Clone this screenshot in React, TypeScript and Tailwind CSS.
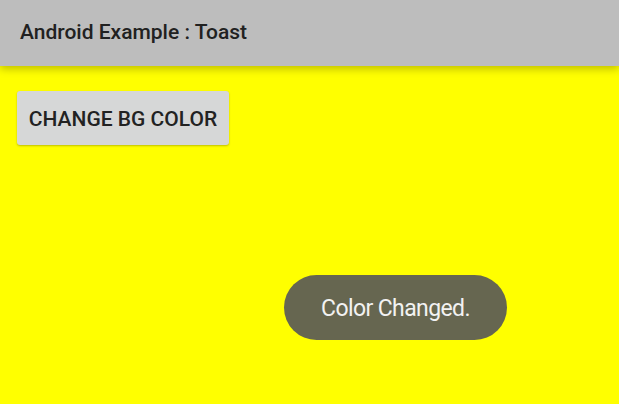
import React from "react";

const App: React.FC = () => {
  return (
    <div className="w-[619px] h-[404px] bg-[#ffff00] flex flex-col overflow-hidden font-['Roboto',sans-serif]">
      <header className="h-[66px] shrink-0 bg-[#bdbdbd] flex items-center px-5 shadow-[0_3px_8px_rgba(0,0,0,0.25)] relative z-10">
        <h1 className="text-[21px] font-medium text-[#212121]">Android Example : Toast</h1>
      </header>
      <main className="flex-1 flex flex-col">
        <div className="pt-[25px] pl-[17px]">
          <button className="w-[212px] h-[54px] bg-[#d6d7d7] rounded-[3px] shadow-[0_1px_2px_rgba(0,0,0,0.25)] text-[21px] font-medium text-[#222222] uppercase">
            <span className="inline-block translate-y-[2px]">Change BG Color</span>
          </button>
        </div>
        <div className="flex justify-end pr-[112px] pt-[130px]">
          <div className="w-[223px] h-[65px] rounded-full bg-[#666650] flex items-center justify-center">
            <span className="text-[23px] text-[#f2f2f2] tracking-[-0.6px] translate-y-[2px]">Color Changed.</span>
          </div>
        </div>
      </main>
    </div>
  );
};

export default App;
